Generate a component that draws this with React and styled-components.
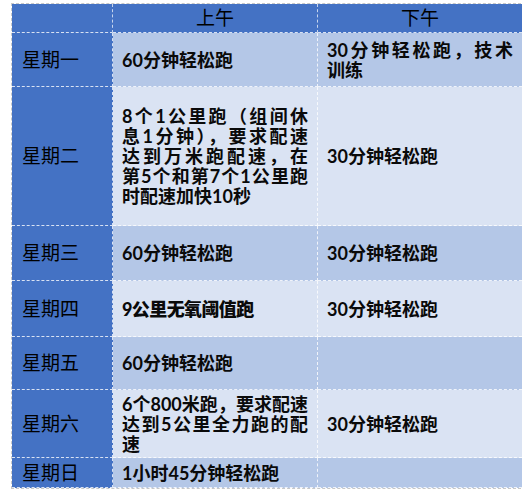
import React from 'react';
import styled, { createGlobalStyle } from 'styled-components';

const GlobalStyle = createGlobalStyle`
  body {
    margin: 0;
    background: #ffffff;
    font-family: Lato, "Noto Sans CJK SC", sans-serif;
  }
`;

const Table = styled.div`
  display: grid;
  grid-template-columns: 101px 205px 204px;
  grid-template-rows: 29px 54px 139px 55px 56px 53px 68px 30px;
  width: 510px;
  margin: 3px 0 0 11px;
  border: 1px dashed #c8c8c8;
  box-sizing: border-box;
  color: #0a0a0a;
  font-size: 18px;
  line-height: 20px;
`;

const Cell = styled.div`
  display: flex;
  flex-direction: column;
  justify-content: center;
  padding: 0 9px 0 9px;
  box-sizing: border-box;
  border-right: 1px dashed rgba(255, 255, 255, 0.8);
  border-bottom: 1px dashed rgba(255, 255, 255, 0.8);
  background: ${(p) => (p.$shade === 'dark' ? '#b4c7e7' : '#dae3f3')};
  font-weight: ${(p) => (p.$heavy ? 900 : 700)};
  letter-spacing: ${(p) => (p.$heavy ? '-0.6px' : '0')};
  &:nth-child(3n) {
    border-right: none;
  }
`;

const HeadCell = styled(Cell)`
  background: #4472c4;
  align-items: center;
  font-weight: 400;
  font-size: 19px;
  color: #000;
  padding: 0;
  border-right: 1px dashed rgba(255, 255, 255, 0.7);
`;

const DayCell = styled(Cell)`
  background: #4472c4;
  font-weight: 400;
  font-size: 19px;
  color: #000;
  padding-left: 10px;
`;

const Line = styled.span`
  display: block;
  text-align: ${(p) => (p.$fill ? 'justify' : 'left')};
  text-align-last: ${(p) => (p.$fill ? 'justify' : 'left')};
  white-space: nowrap;
`;

const rows = [
  { day: '星期一', am: ['60分钟轻松跑'], pm: ['30分钟轻松跑，技术', '训练'] },
  {
    day: '星期二',
    am: ['8个1公里跑（组间休', '息1分钟），要求配速', '达到万米跑配速，在', '第5个和第7个1公里跑', '时配速加快10秒'],
    pm: ['30分钟轻松跑'],
  },
  { day: '星期三', am: ['60分钟轻松跑'], pm: ['30分钟轻松跑'] },
  { day: '星期四', am: ['9公里无氧阈值跑'], pm: ['30分钟轻松跑'], heavy: true },
  { day: '星期五', am: ['60分钟轻松跑'], pm: [] },
  { day: '星期六', am: ['6个800米跑，要求配速', '达到5公里全力跑的配', '速'], pm: ['30分钟轻松跑'] },
  { day: '星期日', am: ['1小时45分钟轻松跑'], pm: [] },
];

const Text = ({ lines }) => lines.map((line, i) => (
  <Line key={line} $fill={lines.length > 1 && i < lines.length - 1}>
    {line}
  </Line>
));

const App = () => (
  <>
    <GlobalStyle />
    <Table>
      <HeadCell />
      <HeadCell>上午</HeadCell>
      <HeadCell>下午</HeadCell>
      {rows.map((row, i) => {
        const shade = i % 2 === 0 ? 'dark' : 'light';
        return (
          <React.Fragment key={row.day}>
            <DayCell>{row.day}</DayCell>
            <Cell $shade={shade} $heavy={row.heavy}><Text lines={row.am} /></Cell>
            <Cell $shade={shade}><Text lines={row.pm} /></Cell>
          </React.Fragment>
        );
      })}
    </Table>
  </>
);

export default App;
